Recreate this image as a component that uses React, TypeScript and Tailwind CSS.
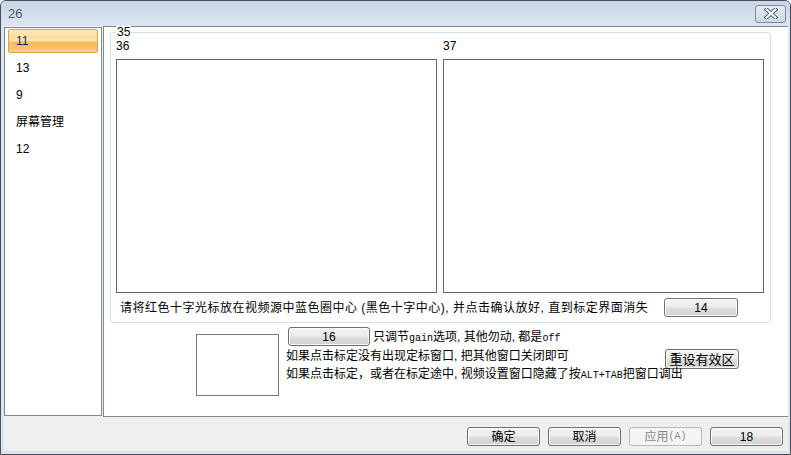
import React from 'react';
import clsx from 'clsx';

const mono = "font-['Liberation_Mono',monospace] text-[10px]";

function Btn({ children, disabled, className }: any) {
  return (
    <div
      className={clsx(
        'flex h-[19px] w-[73px] shrink-0 items-center justify-center rounded-[3px] border text-[12px] leading-none',
        disabled
          ? 'border-[#b5b9bc] bg-[#f4f4f4] text-[#8a8a8a]'
          : 'border-[#707070] bg-[linear-gradient(#f3f3f3_0%,#ececec_48%,#dedede_52%,#d2d2d2_100%)] text-black shadow-[inset_0_0_0_1px_#fbfbfb]',
        className
      )}
    >
      {children}
    </div>
  );
}

function CloseBtn() {
  return (
    <div className="flex h-[18px] w-[31px] items-center justify-center rounded-[3px] border border-[#7f8b9b] bg-[linear-gradient(#e4ecf5,#cdd9e7)]">
      <svg width="14" height="11" viewBox="0 0 14 11">
        <path d="M2.5 1.5 L11.5 9.5 M11.5 1.5 L2.5 9.5" stroke="#5a6270" strokeWidth="4" strokeLinecap="square" />
        <path d="M2.5 1.5 L11.5 9.5 M11.5 1.5 L2.5 9.5" stroke="#ffffff" strokeWidth="2" strokeLinecap="square" />
      </svg>
    </div>
  );
}

const items = ['11', '13', '9', '屏幕管理', '12'];

export default function App() {
  return (
    <div className="flex h-[455px] w-[791px] flex-col overflow-hidden rounded-t-[6px] border border-[#4a4d52] bg-[#dae5f1] font-['Liberation_Sans','Noto_Sans_CJK_SC',sans-serif] text-[12px] text-black">
      {/* title bar */}
      <div className="flex h-[25px] shrink-0 items-center justify-between bg-[linear-gradient(#c9d6e6,#dbe6f2)] pl-[7px] pr-[4px]">
        <span className="text-[13px] text-[#4c5866]">26</span>
        <CloseBtn />
      </div>

      {/* client */}
      <div className="mb-[3px] ml-[3px] mr-[2px] flex flex-1 flex-col bg-[#efefef]">
        <div className="flex h-[391px] gap-[1px] pt-[1px]">
          {/* list */}
          <div className="mb-[1px] flex w-[98px] flex-col gap-[3px] border border-[#828790] bg-white px-[3px] pt-[1px]">
            {items.map((it, i) => (
              <div
                key={it}
                className={clsx(
                  'flex h-[24px] items-center border pl-[7px] leading-none',
                  i === 0
                    ? 'rounded-[2px] border-[#d6a44c] bg-[linear-gradient(#fde8b9_0%,#fcdc9b_38%,#fde9c0_46%,#f7b754_58%,#f8c470_85%,#fad491_100%)] text-[#1b1d6b]'
                    : 'border-transparent'
                )}
              >
                {it}
              </div>
            ))}
          </div>

          {/* content */}
          <div className="-mt-[1px] flex flex-1 flex-col border border-[#828790] border-r-0 bg-white">
            {/* group box */}
            <div className="relative ml-[6px] mt-[5px] w-[661px] rounded-[3px] border border-[#d5dfe5] pb-[5px] pl-[5px] pr-[7px] pt-[7px]">
              <span className="absolute -top-[7px] left-[5px] bg-white px-[1px] leading-[12px]">35</span>
              <div className="flex gap-[6px]">
                <div className="flex flex-col">
                  <span className="h-[12px] leading-[12px]">36</span>
                  <div className="mt-[7px] h-[234px] w-[321px] border border-[#646464]" />
                </div>
                <div className="flex flex-col">
                  <span className="h-[12px] leading-[12px]">37</span>
                  <div className="mt-[7px] h-[234px] w-[321px] border border-[#646464]" />
                </div>
              </div>
              <div className="mt-[5px] flex h-[19px] items-center">
                <span className="ml-[4px] flex-1 tracking-[0.5px]">
                  请将红色十字光标放在视频源中蓝色圈中心 (黑色十字中心), 并点击确认放好, 直到标定界面消失
                </span>
                <Btn className="mr-[25px] w-[74px]">14</Btn>
              </div>
            </div>

            {/* below group */}
            <div className="mt-[4px] flex">
              <div className="ml-[92px] mt-[7px] h-[62px] w-[83px] border border-[#7a7a7a]" />
              <div className="ml-[7px] flex flex-col">
                <div className="flex h-[19px] items-center">
                  <Btn className="ml-[2px] w-[82px]">16</Btn>
                  <span className="ml-[3px]">
                    只调节<span className={mono}>gain</span>选项, 其他勿动, 都是<span className={mono}>off</span>
                  </span>
                </div>
                <div className="mt-[1px] flex h-[18px] items-start">
                  <span className="w-[379px] leading-[18px]">如果点击标定没有出现定标窗口, 把其他窗口关闭即可</span>
                  <Btn className="mt-[2px] h-[20px] w-[74px] text-[13px]">重设有效区</Btn>
                </div>
                <div className="h-[18px] leading-[18px]">
                  如果点击标定，或者在标定途中, 视频设置窗口隐藏了按<span className={mono}>ALT+TAB</span>把窗口调出
                </div>
              </div>
            </div>
          </div>
        </div>

        {/* bottom buttons */}
        <div className="flex justify-end gap-[8px] pr-[5px] pt-[10px]">
          <Btn>确定</Btn>
          <Btn>取消</Btn>
          <Btn disabled>
            应用<span className={mono}>(A)</span>
          </Btn>
          <Btn>18</Btn>
        </div>
      </div>
    </div>
  );
}
